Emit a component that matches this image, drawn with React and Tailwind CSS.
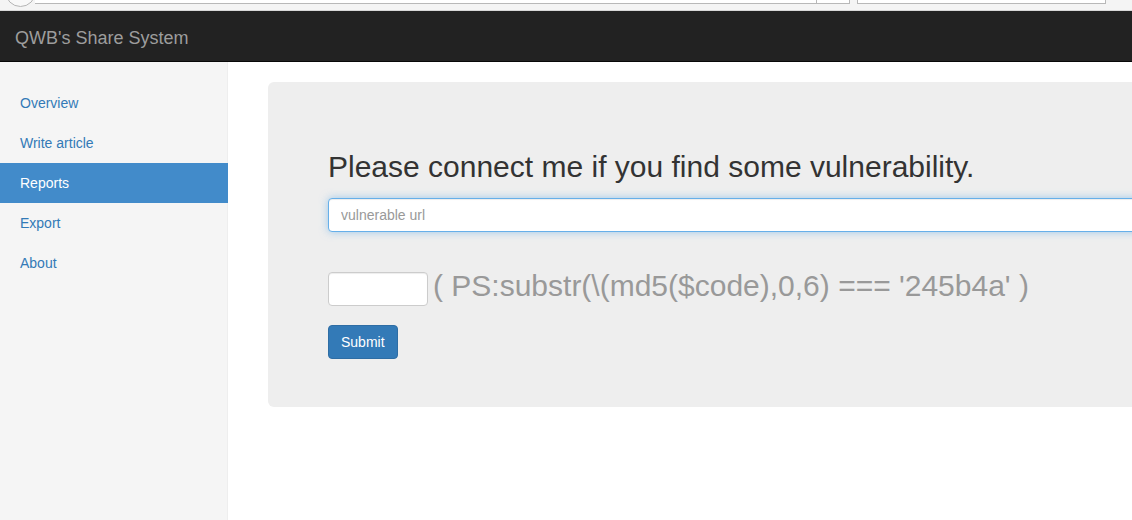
export default function App() {
  const items = ['Overview', 'Write article', 'Reports', 'Export', 'About'];
  const active = 'Reports';

  return (
    <div className="h-[520px] w-[1132px] overflow-hidden flex flex-col bg-white font-['Liberation_Sans',Arial,sans-serif] text-[14px] text-[#333]">
      {/* browser chrome remnant */}
      <div className="h-[11px] shrink-0 bg-[#f4f4f4] border-b border-[#d8d8d8] flex items-start overflow-hidden">
        <div className="w-[31px] h-[31px] ml-[5px] -mt-[24px] rounded-full border border-[#b5b5b5] bg-[#f8f8f8] shrink-0" />
        <div className="w-[815px] h-[4px] -ml-[1px] border-b border-r border-[#b8b8b8] bg-white flex justify-end">
          <div className="w-[33px] border-l border-[#b8b8b8]" />
        </div>
        <div className="w-[249px] h-[4px] ml-[7px] border-b border-l border-r border-[#b8b8b8] bg-white" />
      </div>

      {/* navbar */}
      <div className="h-[51px] shrink-0 bg-[#222] border-b border-[#080808] flex items-center px-[15px] pt-[3px]">
        <span className="text-[18px] text-[#9d9d9d] leading-[20px]">QWB's Share System</span>
      </div>

      <div className="flex flex-1 min-h-0">
        <div className="w-[228px] shrink-0 bg-[#f5f5f5] border-r border-[#eee] pt-[21px]">
          {items.map((it) => (
            <a
              key={it}
              href="#"
              className={
                it === active
                  ? 'block px-[20px] py-[10px] leading-[20px] bg-[#428bca] text-white -mr-[1px]'
                  : 'block px-[20px] py-[10px] leading-[20px] text-[#337ab7]'
              }
            >
              {it}
            </a>
          ))}
        </div>

        <div className="flex-1 min-w-0 pl-[40px] pt-[20px] overflow-hidden">
          <div className="w-[1000px] bg-[#eee] rounded-[6px] px-[60px] pt-[48px] pb-[48px]">
            <h2 className="text-[30px] leading-[33px] mt-[20px] mb-[15px] text-[#333]">
              Please connect me if you find some vulnerability.
            </h2>
            <input
              type="text"
              placeholder="vulnerable url"
              className="block w-full h-[34px] px-[12px] bg-white border border-[#66afe9] rounded-[4px] text-[14px] placeholder:text-[#999] shadow-[inset_0_1px_1px_rgba(0,0,0,.075),0_0_8px_rgba(102,175,233,.6)] outline-none"
            />
            <div className="flex items-center mt-[40px]">
              <input
                type="text"
                className="w-[100px] h-[34px] px-[12px] bg-white border border-[#ccc] rounded-[4px] shadow-[inset_0_1px_1px_rgba(0,0,0,.075)] outline-none"
              />
              <span className="ml-[5px] text-[30px] leading-[30px] text-[#999] -mt-[6px]">
                ( PS:substr(\(md5($code),0,6) === '245b4a' )
              </span>
            </div>
            <button className="mt-[19px] h-[34px] px-[12px] bg-[#337ab7] border border-[#2e6da4] rounded-[4px] text-white text-[14px]">
              Submit
            </button>
          </div>
        </div>
      </div>
    </div>
  );
}
